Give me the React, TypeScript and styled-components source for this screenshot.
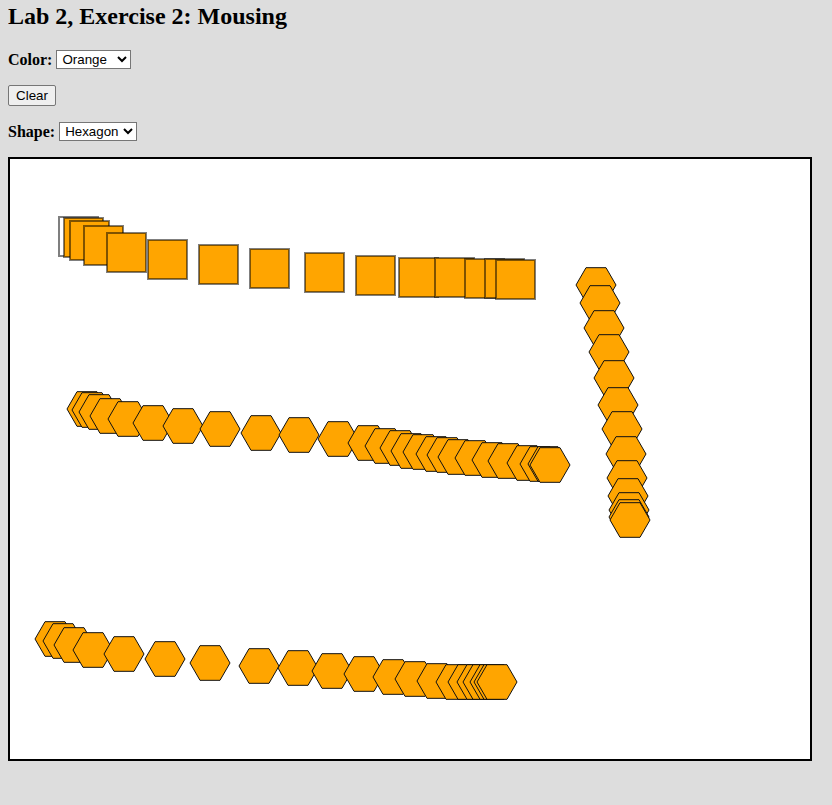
import styled, { createGlobalStyle } from "styled-components";

const GlobalStyle = createGlobalStyle`
  body {
    margin: 0 8px 8px;
    background: #dddddd;
    font-family: "Liberation Serif", "Times New Roman", serif;
    color: #000;
  }
`;

const Title = styled.h2`
  margin: 3px 0 20px;
  font-size: 24px;
  font-weight: bold;
`;

const Row = styled.p`
  margin: 0 0 16px;
  font-size: 16px;
  line-height: 19px;
  display: flex;
  align-items: center;
  gap: 4px;
`;

const Label = styled.b`
  font-weight: bold;
`;

const Select = styled.select<{ $w: number }>`
  width: ${(p) => p.$w}px;
  height: 19px;
  font-family: "Liberation Sans", Arial, sans-serif;
  font-size: 13.33px;
  border: 1px solid #767676;
  border-radius: 0;
  background: #fff;
  padding: 0 0 0 1px;
`;

const Button = styled.button`
  width: 48px;
  height: 21px;
  font-family: "Liberation Sans", Arial, sans-serif;
  font-size: 13.33px;
  background: #efefef;
  border: 1px solid #767676;
  border-radius: 2px;
  padding: 1px 6px;
`;

const Canvas = styled.div`
  width: 800px;
  height: 600px;
  border: 2px solid #000;
  background: #fff;
  margin-top: 1px;
  & > svg {
    display: block;
  }
`;

const OX = 10;
const OY = 159;

const squares: [number, number, boolean][] = [
  [58, 216, false],
  [63, 217, true],
  [69, 220, true],
  [83, 225, true],
  [106, 232, true],
  [147, 239, true],
  [198, 244, true],
  [249, 248, true],
  [304, 252, true],
  [355, 255, true],
  [398, 257, true],
  [434, 257, true],
  [464, 258, true],
  [484, 258, true],
  [495, 259, true],
];

const hexes: [number, number][] = [
  // top-right column
  [596, 285], [600, 303], [604, 328], [609, 352], [614, 378], [618, 405],
  [622, 429], [626, 454], [627, 478], [628, 496], [629, 510], [629, 517],
  [630, 520],
  // middle row
  [87, 409], [92, 410], [99, 412], [110, 416], [128, 419], [153, 423],
  [183, 426], [220, 429], [261, 433], [299, 435], [338, 439], [368, 443],
  [385, 446], [400, 448], [411, 451], [423, 452], [436, 454], [447, 455],
  [458, 457], [475, 458], [492, 460], [508, 461], [527, 463], [540, 464],
  [548, 464], [550, 465],
  // bottom row
  [55, 639], [63, 641], [74, 645], [93, 650], [124, 654], [165, 659],
  [210, 663], [259, 666], [298, 668], [332, 671], [364, 674], [393, 677],
  [415, 679], [437, 681], [456, 682], [468, 682], [477, 682], [483, 682],
  [490, 682], [494, 682], [497, 682],
];

const hexPoints = (cx: number, cy: number, r = 20) =>
  Array.from({ length: 6 }, (_, i) => {
    const a = (Math.PI / 3) * i;
    return `${(cx + r * Math.cos(a)).toFixed(2)},${(cy + r * Math.sin(a)).toFixed(2)}`;
  }).join(" ");

export default function App() {
  return (
    <>
      <GlobalStyle />
      <Title>Lab 2, Exercise 2: Mousing</Title>
      <Row>
        <Label>Color:</Label>
        <Select $w={75} defaultValue="orange">
          <option value="orange">Orange</option>
          <option value="red">Red</option>
          <option value="green">Green</option>
          <option value="blue">Blue</option>
          <option value="purple">Purple</option>
        </Select>
      </Row>
      <Row>
        <Button>Clear</Button>
      </Row>
      <Row>
        <Label>Shape:</Label>
        <Select $w={78} defaultValue="hexagon">
          <option value="square">Square</option>
          <option value="circle">Circle</option>
          <option value="hexagon">Hexagon</option>
        </Select>
      </Row>
      <Canvas>
        <svg width="800" height="600" viewBox="0 0 800 600">
          {squares.map(([x, y, filled], i) => (
            <rect
              key={"s" + i}
              x={x - OX + 1}
              y={y - OY + 1}
              width={39}
              height={39}
              fill={filled ? "orange" : "none"}
              stroke="rgba(0,0,0,0.5)"
              strokeWidth={2}
            />
          ))}
          {hexes.map(([x, y], i) => (
            <polygon
              key={"h" + i}
              points={hexPoints(x - OX, y - OY)}
              fill="orange"
              stroke="#111"
              strokeWidth={1}
            />
          ))}
        </svg>
      </Canvas>
    </>
  );
}
